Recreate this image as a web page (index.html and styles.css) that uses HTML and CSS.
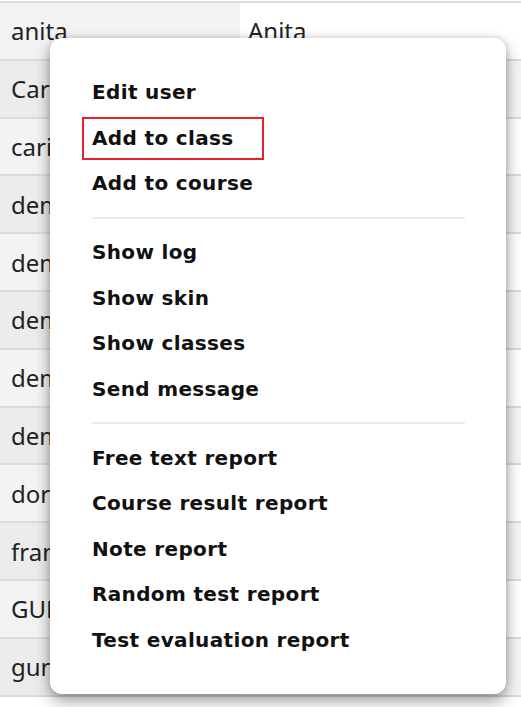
FILE: index.html
```html
<!DOCTYPE html>
<html>
<head>
<meta charset="utf-8">
<link rel="stylesheet" href="styles.css">
</head>
<body>
<div class="page">
  <div class="users">
    <div class="row"><div class="c1">anita</div><div class="c2">Anita</div></div>
    <div class="row"><div class="c1">Carl</div><div class="c2">Carl</div></div>
    <div class="row"><div class="c1">carina</div><div class="c2">Carina</div></div>
    <div class="row"><div class="c1">demo1</div><div class="c2">Demo</div></div>
    <div class="row"><div class="c1">demo2</div><div class="c2">Demo</div></div>
    <div class="row"><div class="c1">demo3</div><div class="c2">Demo</div></div>
    <div class="row"><div class="c1">demo4</div><div class="c2">Demo</div></div>
    <div class="row"><div class="c1">demo5</div><div class="c2">Demo</div></div>
    <div class="row"><div class="c1">dora</div><div class="c2">Dora</div></div>
    <div class="row"><div class="c1">frank</div><div class="c2">Frank</div></div>
    <div class="row"><div class="c1">GUEST</div><div class="c2">Guest</div></div>
    <div class="row"><div class="c1">gunnar</div><div class="c2">Gunnar</div></div>
  </div>

  <div class="menu">
    <div class="item">Edit user</div>
    <div class="item"><span class="marked">Add to class</span></div>
    <div class="item">Add to course</div>
    <div class="sep"></div>
    <div class="item">Show log</div>
    <div class="item">Show skin</div>
    <div class="item">Show classes</div>
    <div class="item">Send message</div>
    <div class="sep"></div>
    <div class="item">Free text report</div>
    <div class="item">Course result report</div>
    <div class="item">Note report</div>
    <div class="item">Random test report</div>
    <div class="item">Test evaluation report</div>
  </div>
</div>
</body>
</html>
```

FILE: styles.css
```css
html, body {
  margin: 0;
  padding: 0;
  background: #ffffff;
}

.page {
  position: relative;
  width: 521px;
  height: 707px;
  overflow: hidden;
}

.users {
  margin-top: 1px;
  border-top: 2px solid #dcdcdc;
  font-family: "Noto Sans", "Open Sans", sans-serif;
  font-size: 24px;
  color: #222;
}

.row {
  display: flex;
  height: 55.8px;
  border-bottom: 2px solid #dcdcdc;
}

.c1, .c2 {
  display: flex;
  align-items: center;
  padding: 0 10px 0 8px;
  white-space: nowrap;
}

.c1 {
  width: 240px;
  box-sizing: border-box;
  padding-left: 11px;
  background: #f3f3f3;
}

.c2 {
  flex: 1;
  background: #ffffff;
}

.row:nth-child(even) .c1 {
  background: #ececec;
}

.row:nth-child(even) .c2 {
  background: #f5f5f5;
}

.menu {
  position: absolute;
  left: 50px;
  top: 38px;
  width: 456px;
  height: 656px;
  box-sizing: border-box;
  padding: 32px 41px 31px 42px;
  background: #ffffff;
  border-radius: 12px;
  box-shadow: 0 7px 16px rgba(0, 0, 0, 0.38), 0 0 6px rgba(0, 0, 0, 0.14);
  font-family: "DejaVu Sans", Verdana, sans-serif;
  font-weight: bold;
  font-size: 20px;
  letter-spacing: 0.35px;
  color: #111;
}

.item {
  height: 45.5px;
  line-height: 45.5px;
  white-space: nowrap;
}

.marked {
  position: relative;
}

.marked::after {
  content: "";
  position: absolute;
  left: -10px;
  right: -30px;
  top: -9px;
  bottom: -10px;
  border: 2px solid #e8202a;
}

.sep {
  height: 2px;
  margin: 10px 0 11.5px;
  background: #ececec;
}
```
